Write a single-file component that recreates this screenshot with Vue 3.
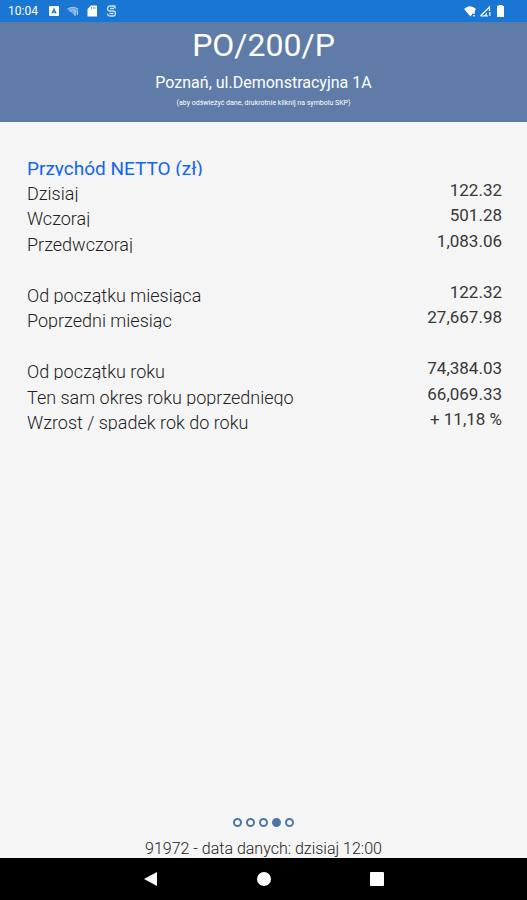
<template>
  <div class="screen">
    <div class="status-bar">
      <span class="clock">10:04</span>
      <div class="status-icons">
        <svg class="status-icon" viewBox="0 0 12 12">
          <rect x="1" y="1" width="10" height="10" rx="1" fill="#fff" />
          <path d="M4 8.4 6 4l2 4.4M4.6 7.2h2.8" fill="none" stroke="#1976d2" stroke-width="1.2" />
        </svg>
        <svg class="status-icon faded" viewBox="0 0 12 12">
          <path d="M0.5 4.5Q6 0 11.5 4.5L8.5 11Z" fill="#fff" opacity="0.6" />
          <path d="M0.5 4Q6 0.5 11 4M2.5 6Q6 3.5 9 6M8 6v5M10.5 6v4" fill="none" stroke="#fff" stroke-width="1" />
        </svg>
        <svg class="status-icon" viewBox="0 0 12 12">
          <path d="M5 0.5h6v11H1.5V4Z" fill="#fff" />
          <path d="M5.5 2v2M7.3 2v2M9 2v2" stroke="#1976d2" stroke-width="0.6" />
        </svg>
        <svg class="status-icon" viewBox="0 0 12 12">
          <path d="M10.5 1H5Q2.500 1 2.500 3.500T5 6h3q2.500 0 2.500 2.500T8 11H5Q2.500 11 2.500 8.500M10.500 3.500Q10 1 7 1M5 3.500h4M4.500 8.500h4" fill="none" stroke="#fff" stroke-width="1.3" opacity="0.75" />
        </svg>
      </div>
      <div class="system-icons">
        <svg class="system-icon" viewBox="0 0 13 12">
          <path d="M0 4Q6 -1.5 12 4L6.5 11.5Z" fill="#fff" />
          <path d="M10 5v4M10 10v1.5" stroke="#fff" stroke-width="1.5" />
        </svg>
        <svg class="system-icon" viewBox="0 0 13 12">
          <path d="M1.5 11 10.5 2v4M1.5 11H9" fill="none" stroke="#fff" stroke-width="1.2" />
          <path d="M4.5 11 8 7.5V11ZM10 7v4h1.5V7Z" fill="#fff" opacity="0.8" />
        </svg>
        <svg class="system-icon" viewBox="0 0 13 12">
          <path d="M4.5 0h4v1H10v11H3V1h1.5Z" fill="#fff" />
        </svg>
      </div>
    </div>

    <header class="header">
      <h1 class="title">PO/200/P</h1>
      <p class="address">Poznań, ul.Demonstracyjna 1A</p>
      <p class="hint">(aby odświeżyć dane, drukrotnie kliknij na symbolu SKP)</p>
    </header>

    <main class="content">
      <h2 class="section-title">Przychód NETTO (zł)</h2>
      <table class="report">
        <tbody>
          <tr v-for="(row, index) in rows" :key="index">
            <th scope="row"><span class="label">{{ row.label }}</span></th>
            <td>{{ row.value }}</td>
          </tr>
        </tbody>
      </table>
    </main>

    <footer class="footer">
      <div class="pager">
        <button
          v-for="page in 5"
          :key="page"
          class="dot"
          :class="{ active: page === currentPage }"
          :aria-label="`Strona ${page}`"
          @click="currentPage = page"
        ></button>
      </div>
      <p class="data-info">91972 - data danych: dzisiaj 12:00</p>
    </footer>

    <nav class="nav-bar">
      <button class="nav-button" aria-label="Wstecz">
        <svg viewBox="0 0 14 14"><path d="M0 7 13 0v14Z" fill="#fff" /></svg>
      </button>
      <button class="nav-button" aria-label="Ekran główny">
        <svg viewBox="0 0 14 14"><circle cx="7" cy="7" r="7" fill="#fff" /></svg>
      </button>
      <button class="nav-button" aria-label="Ostatnie">
        <svg viewBox="0 0 14 14"><rect width="14" height="14" rx="1" fill="#fff" /></svg>
      </button>
    </nav>
  </div>
</template>

<script setup>
import { ref } from 'vue'

const currentPage = ref(4)

// empty rows separate the day, month and year groups
const rows = [
  { label: 'Dzisiaj', value: '122.32' },
  { label: 'Wczoraj', value: '501.28' },
  { label: 'Przedwczoraj', value: '1,083.06' },
  { label: '', value: '' },
  { label: 'Od początku miesiąca', value: '122.32' },
  { label: 'Poprzedni miesiąc', value: '27,667.98' },
  { label: '', value: '' },
  { label: 'Od początku roku', value: '74,384.03' },
  { label: 'Ten sam okres roku poprzedniego', value: '66,069.33' },
  { label: 'Wzrost / spadek rok do roku', value: '+ 11,18 %' },
]
</script>

<style>
body {
  margin: 0;
}
</style>

<style scoped>
.screen {
  min-height: 100vh;
  display: flex;
  flex-direction: column;
  background-color: #f5f5f5;
  color: #222222;
  font-family: Roboto, "Liberation Sans", sans-serif;
}

.status-bar {
  height: 22px;
  padding: 0 20px 0 8px;
  display: flex;
  align-items: center;
  background-color: #1976d2;
  color: #ffffff;
}

.clock {
  font-size: 12px;
  line-height: 22px;
}

.status-icons {
  margin-left: 10px;
  display: flex;
  gap: 7px;
}

.status-icon {
  width: 12px;
  height: 12px;
}

.faded {
  opacity: 0.6;
}

.system-icons {
  margin-left: auto;
  display: flex;
  gap: 2px;
}

.system-icon {
  width: 13px;
  height: 12px;
}

.header {
  height: 100px;
  background-color: #5f7ca8;
  color: #ffffff;
  text-align: center;
}

.title {
  margin: 0;
  font-size: 32px;
  font-weight: 400;
  line-height: 46px;
}

.address {
  margin: 0;
  font-size: 16px;
  line-height: 30px;
}

.hint {
  margin: 0;
  font-size: 7px;
  line-height: 10px;
}

.content {
  flex: 1;
  padding: 33px 25px 0 27px;
}

.section-title {
  height: 21px;
  margin: 0 0 2px;
  overflow: hidden;
  color: #1464f4;
  font-size: 19px;
  font-weight: 400;
  line-height: 28px;
}

.report {
  width: 100%;
  border-collapse: collapse;
  font-size: 18px;
}

.report tr {
  height: 25px;
}

.report tr:nth-child(even) {
  height: 26px;
}

.report th,
.report td {
  padding: 0;
  font-weight: 300;
  line-height: 25px;
  vertical-align: top;
}

.report th {
  text-align: left;
}

.report td {
  color: #383838;
  font-size: 17px;
  font-weight: 400;
  text-align: right;
}

.label {
  display: block;
  height: 24px;
  overflow: hidden;
  line-height: 32px;
}

.footer {
  text-align: center;
}

.pager {
  display: flex;
  justify-content: center;
  gap: 4px;
}

.dot {
  width: 9px;
  height: 9px;
  padding: 0;
  border: 2px solid #4a76a8;
  border-radius: 50%;
  background: #ffffff;
  cursor: pointer;
}

.dot.active {
  background: #4a76a8;
}

.data-info {
  margin: 12px 0 0;
  font-size: 16px;
  font-weight: 300;
  line-height: 19px;
}

.nav-bar {
  height: 42px;
  padding: 0 94px;
  display: flex;
  align-items: center;
  justify-content: space-around;
  background-color: #000000;
}

.nav-button {
  padding: 0;
  border: none;
  background: none;
  cursor: pointer;
}

.nav-button svg {
  width: 14px;
  height: 14px;
  display: block;
}
</style>
